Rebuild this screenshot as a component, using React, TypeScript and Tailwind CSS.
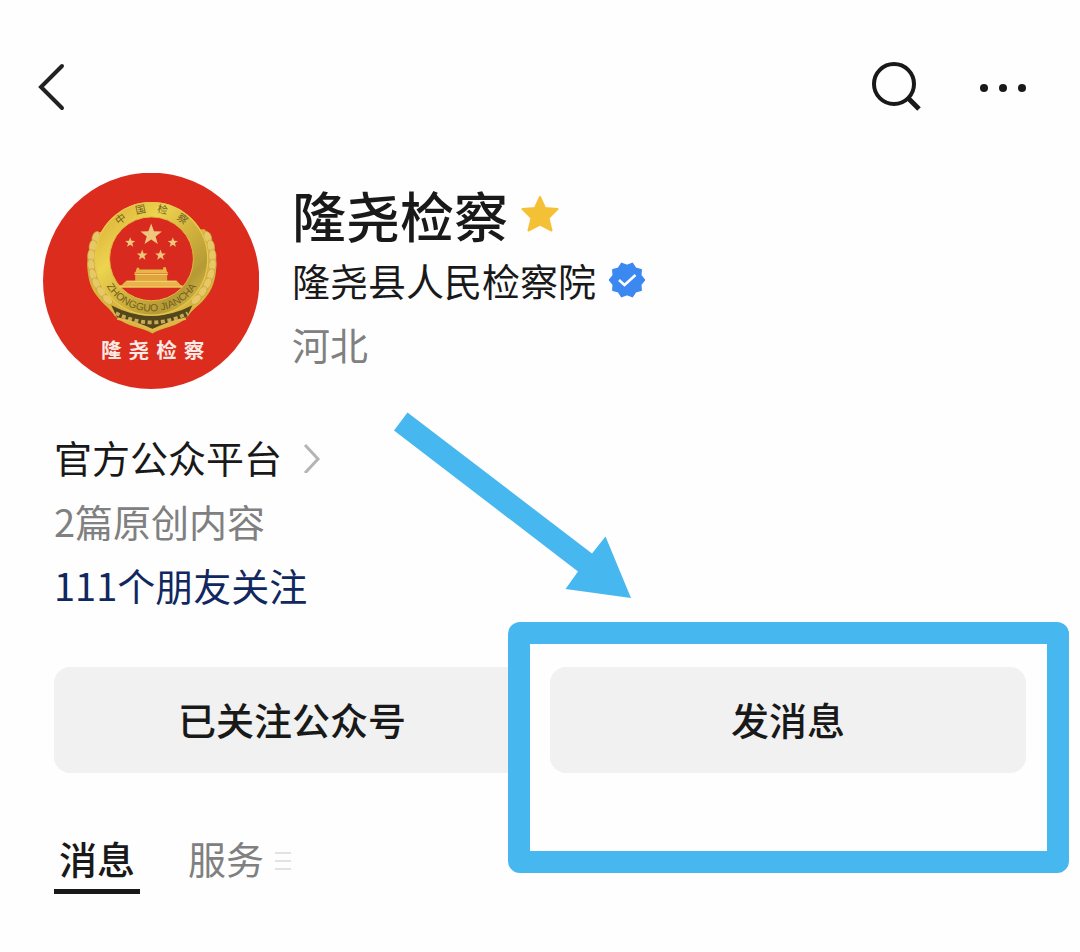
import React from "react";

const GOLD_STAR = "M0 -10 L2.5 -3.2 L9.5 -3.1 L3.9 1.3 L5.9 8.1 L0 4.1 L-5.9 8.1 L-3.9 1.3 L-9.5 -3.1 L-2.5 -3.2 Z";

const leaves = [
  { x: 198, y: 232, r: 20 },
  { x: 189, y: 258, r: 10 },
  { x: 184, y: 287, r: 2 },
  { x: 184, y: 316, r: -8 },
  { x: 189, y: 344, r: -18 },
  { x: 199, y: 371, r: -28 },
  { x: 214, y: 396, r: -36 },
  { x: 233, y: 419, r: -46 },
];

function Avatar() {
  return (
    <svg viewBox="39 39 649 649" className="size-[216px] shrink-0" role="img" aria-label="隆尧检察">
      <defs>
        <linearGradient id="ring" x1="0" y1="0" x2="1" y2="1">
          <stop offset="0" stopColor="#dcae35" />
          <stop offset="0.3" stopColor="#ecd450" />
          <stop offset="0.5" stopColor="#d8b840" />
          <stop offset="0.8" stopColor="#b59a35" />
          <stop offset="1" stopColor="#d9b848" />
        </linearGradient>
        <path id="arcTop" d="M224 297 A141 141 0 0 1 506 297" />
        <path id="arcBottom" d="M207 297 A158 158 0 0 0 523 297" />
      </defs>
      <circle cx="364" cy="363" r="325" fill="#dc2c1e" />
      <path
        d="M208 216 C165 245 160 350 196 402 C222 438 240 445 254 468 C290 502 335 502 368 521 C400 502 445 502 476 468 C490 445 512 438 536 402 C572 350 567 245 524 208 Z"
        fill="#d8b63f"
      />
      {leaves.map((l) => (
        <g key={l.y} fill="#e6c866" stroke="#c9a03c" strokeWidth="2">
          <ellipse cx={l.x} cy={l.y} rx="11" ry="18" transform={`rotate(${l.r} ${l.x} ${l.y})`} />
          <ellipse cx={732 - l.x} cy={l.y} rx="11" ry="18" transform={`rotate(${-l.r} ${732 - l.x} ${l.y})`} />
        </g>
      ))}
      <path d="M244 436 Q365 500 488 436 L470 474 Q420 494 368 508 Q310 494 262 474 Z" fill="#54461c" />
      <path d="M258 460 Q365 516 474 460" fill="none" stroke="#c9ab56" strokeWidth="11" strokeDasharray="12 8" />
      <path d="M262 476 Q320 488 368 512 Q416 488 468 476" fill="none" stroke="#e0b94a" strokeWidth="8" />
      <circle cx="365" cy="297" r="148" fill="none" stroke="url(#ring)" strokeWidth="46" />
      <circle cx="365" cy="297" r="169" fill="none" stroke="#e6c94f" strokeWidth="4" />
      <circle cx="365" cy="297" r="126" fill="#d92a1f" stroke="#e3b640" strokeWidth="3" />
      <g fill="#efc77c">
        <path d={GOLD_STAR} transform="translate(364 225) scale(3.4)" />
        <path d={GOLD_STAR} transform="translate(301 248) scale(1.6)" />
        <path d={GOLD_STAR} transform="translate(429 248) scale(1.6)" />
        <path d={GOLD_STAR} transform="translate(337 286) scale(1.7)" />
        <path d={GOLD_STAR} transform="translate(392 286) scale(1.7)" />
      </g>
      <g fill="#e8b548">
        <path d="M318 334 L321 324 H328 V329 H400 V322 H408 L411 334 L416 341 H312 Z" />
        <path d="M316 341 H412 V364 H316 Z" fill="#dfa43c" />
        <path d="M290 362 H440 L454 377 H274 Z" />
        <path d="M268 376 H458 V384 H268 Z" fill="#efc25a" />
      </g>
      <path d="M314 344 H414 M292 365 H438" stroke="#f0cf74" strokeWidth="3" />
      <g fill="#6f5f22" fontFamily="'Noto Sans CJK SC', sans-serif">
        <text fontSize="31">
          <textPath href="#arcTop" startOffset="50%" textAnchor="middle">
            中　国　检　察
          </textPath>
        </text>
        <text fontSize="31" fontFamily="'Liberation Sans', sans-serif">
          <textPath href="#arcBottom" startOffset="50%" textAnchor="middle">
            ZHONGGUO JIANCHA
          </textPath>
        </text>
      </g>
      <text
        x="213 296 379 462"
        y="595"
        fontSize="62"
        fontWeight="700"
        fill="#fbe9e4"
        fontFamily="'Noto Sans CJK SC', sans-serif"
      >
        隆尧检察
      </text>
    </svg>
  );
}

function StarIcon() {
  return (
    <svg viewBox="0 0 40 40" className="size-10" aria-hidden="true">
      <path
        d="M20 2 L25 13 L37.5 14 L28.5 23 L31.5 35.5 L20 29.5 L8.5 35.5 L11.5 23 L2.5 14 L15 13 Z"
        fill="#f4c036"
        stroke="#f4c036"
        strokeWidth="2"
        strokeLinejoin="round"
      />
    </svg>
  );
}

// ten-point burst, alternating outer and inner radius
const burst = Array.from({ length: 20 }, (_, i) => {
  const r = i % 2 === 0 ? 14.5 : 17.5;
  const a = (Math.PI / 10) * i - Math.PI / 2;
  return `${(19 + r * Math.cos(a)).toFixed(2)},${(19 + r * Math.sin(a)).toFixed(2)}`;
}).join(" ");

function VerifiedIcon() {
  return (
    <svg viewBox="0 0 38 38" className="size-[38px]" role="img" aria-label="已认证">
      <polygon points={burst} fill="#3b88f0" stroke="#3b88f0" strokeWidth="1.5" strokeLinejoin="round" />
      <path d="M11 19 L16.5 24 L27.5 14" fill="none" stroke="#fff" strokeWidth="2.5" />
    </svg>
  );
}

function TopBar() {
  return (
    <header className="flex h-12 items-center justify-between">
      <button aria-label="返回">
        <svg viewBox="0 0 30 48" className="h-12 w-[30px]" fill="none" stroke="#222" strokeWidth="4" strokeLinecap="round">
          <path d="M24 3 L3 24 L24 45" />
        </svg>
      </button>
      <div className="flex items-center gap-14">
        <button aria-label="搜索">
          <svg viewBox="0 0 52 52" className="size-[52px]" fill="none" stroke="#191919" strokeWidth="4">
            <circle cx="24" cy="23" r="20" />
            <path d="M38 37 L49 48" strokeWidth="5" />
          </svg>
        </button>
        <button aria-label="更多">
          <svg viewBox="0 0 50 10" className="h-[10px] w-[50px]" fill="#191919">
            <circle cx="6" cy="6" r="4" />
            <circle cx="25" cy="6" r="4" />
            <circle cx="44" cy="6" r="4" />
          </svg>
        </button>
      </div>
    </header>
  );
}

// Pointer and frame drawn over the message button
function Highlight() {
  return (
    <div className="pointer-events-none" aria-hidden="true">
      <svg viewBox="394 412 238 187" className="absolute -left-[156px] -top-[255px] h-[187px] w-[238px]" fill="#47b7ef">
        <path d="M407.5 412.5 L592 553.5 L605.5 536.5 L631 598 L565.5 589 L578 571.5 L394 430.5 Z" />
      </svg>
      <div className="absolute -bottom-[100px] -left-[42px] -right-[43px] -top-[45px] rounded-xl border-[22px] border-[#47b7ef]" />
    </div>
  );
}

export default function App() {
  return (
    <div
      lang="zh-CN"
      className="min-h-screen overflow-x-hidden bg-[#fefefe] pt-[63px] pb-14 font-['Noto_Sans_CJK_SC',sans-serif] text-[38px] text-[#191919]"
    >
      <div className="pl-[38px] pr-[52px]">
        <TopBar />
      </div>

      <section className="mt-[62px] flex items-center gap-[33px] px-[43px]">
        <Avatar />
        <div className="pb-1">
          <div className="flex items-center gap-3">
            <h1 className="text-[54px] leading-[66px] font-medium">隆尧检察</h1>
            <StarIcon />
          </div>
          <div className="flex items-center gap-3">
            <p className="leading-[64px]">隆尧县人民检察院</p>
            <VerifiedIcon />
          </div>
          <p className="leading-[64px] text-[#808080]">河北</p>
        </div>
      </section>

      <main className="px-[54px]">
        <div className="mt-9 leading-[64px]">
          <a href="#platform" className="flex items-center gap-5">
            官方公众平台
            <svg viewBox="0 0 20 32" className="h-8 w-5" fill="none" stroke="#b4b4b4" strokeWidth="3">
              <path d="M3 4 L16 18 L3 32" />
            </svg>
          </a>
          <p className="text-[#808080]">2篇原创内容</p>
          <a href="#friends" className="block text-[#10285f]">
            111个朋友关注
          </a>
        </div>

        <div className="mt-[50px] grid grid-cols-2 gap-5">
          <button className="h-[106px] rounded-2xl bg-[#f1f1f1] pb-1 font-medium">已关注公众号</button>
          <div className="relative">
            <button className="h-[106px] w-full rounded-2xl bg-[#f1f1f1] pb-1 font-medium">发消息</button>
            <Highlight />
          </div>
        </div>

        <nav className="mt-[54px] flex items-start gap-12">
          <button className="border-b-[5px] border-[#191919] px-[5px] leading-[62px] font-medium">消息</button>
          <button className="flex items-center gap-[10px] leading-[62px] text-[#808080]">
            服务
            <svg viewBox="0 0 18 24" className="h-6 w-[18px]" stroke="#e2e2e2" strokeWidth="2">
              <path d="M1 7 H17 M1 15 H17 M1 23 H17" />
            </svg>
          </button>
        </nav>
      </main>
    </div>
  );
}
